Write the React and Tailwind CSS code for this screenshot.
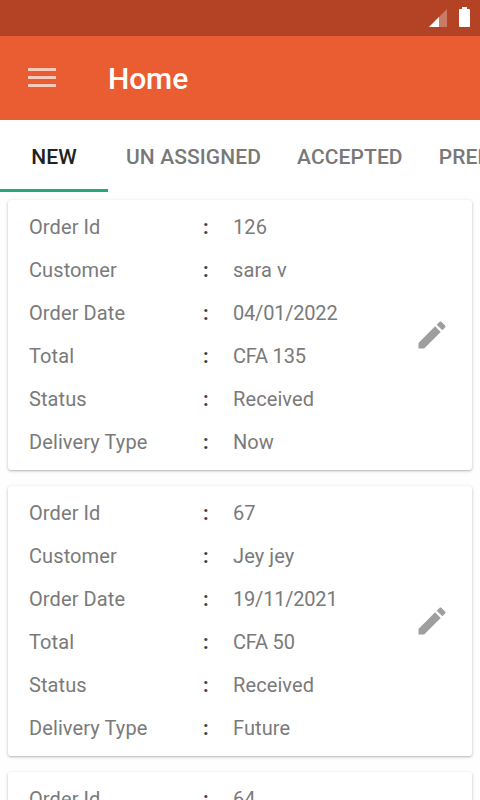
const orders = [
  { id: '126', customer: 'sara v', date: '04/01/2022', total: 'CFA 135', status: 'Received', delivery: 'Now' },
  { id: '67', customer: 'Jey jey', date: '19/11/2021', total: 'CFA 50', status: 'Received', delivery: 'Future' },
  { id: '64', customer: 'Jey jey', date: '19/11/2021', total: 'CFA 50', status: 'Received', delivery: 'Now' },
];

function Row({ label, value, numeric }) {
  return (
    <div className="flex h-[43px] items-center">
      <span className="w-[174px] text-[#7a7a7a]">{label}</span>
      <span className="w-[30px] font-bold text-[#424242]">:</span>
      <span className={numeric ? 'tracking-[-0.2px] text-[#7a7a7a]' : 'text-[#7a7a7a]'}>{value}</span>
    </div>
  );
}

function OrderCard({ order }) {
  return (
    <article className="flex h-[270px] shrink-0 items-center justify-between rounded-[3px] bg-white pl-[21px] pr-[22px] shadow-[0_1px_2px_rgba(0,0,0,0.2),0_1px_4px_rgba(0,0,0,0.12)]">
      <div className="pb-[2px] text-[20px] leading-[24px] tracking-[0.1px]">
        <Row label="Order Id" value={order.id} />
        <Row label="Customer" value={order.customer} />
        <Row label="Order Date" value={order.date} numeric />
        <Row label="Total" value={order.total} numeric />
        <Row label="Status" value={order.status} />
        <Row label="Delivery Type" value={order.delivery} />
      </div>
      <svg viewBox="0 0 24 24" className="size-9 fill-[#9e9e9e]">
        <path d="M3 17.25V21h3.75L17.81 9.94l-3.75-3.75L3 17.25zM20.71 7.04c.39-.39.39-1.02 0-1.41l-2.34-2.34c-.39-.39-1.02-.39-1.41 0l-1.83 1.83 3.75 3.75 1.83-1.83z" />
      </svg>
    </article>
  );
}

export default function App() {
  return (
    <div className="flex h-[800px] w-[480px] flex-col overflow-hidden bg-white font-['Roboto',sans-serif]">
      <div className="flex h-9 shrink-0 items-start justify-end bg-[#b34324] pr-[10px] pt-[7px]">
        <svg width="18" height="18" viewBox="0 0 18 18" className="mr-3 mt-[2px]">
          <path d="M0 18L18 0V18Z" fill="#fff" fillOpacity="0.3" />
          <path d="M0 18L10 8V18Z" fill="#fff" />
        </svg>
        <svg width="11" height="20" viewBox="0 0 11 20" fill="#fff">
          <path d="M3 0h5v2h2q1 0 1 1v16q0 1-1 1H1q-1 0-1-1V3q0-1 1-1h2z" />
        </svg>
      </div>
      <header className="flex h-[84px] shrink-0 items-center bg-[#ea5c32] pl-7">
        <div className="mb-[2px] flex w-7 flex-col gap-[5px]">
          <span className="h-[3px] bg-[#f7cabc]" />
          <span className="h-[3px] bg-[#f7cabc]" />
          <span className="h-[3px] bg-[#f7cabc]" />
        </div>
        <h1 className="ml-[52px] mt-px text-[30px] font-medium tracking-[-0.1px] text-white">Home</h1>
      </header>
      <nav className="flex h-[72px] shrink-0 whitespace-nowrap text-[21px] font-medium leading-[69px] tracking-[0.1px] text-[#787878]">
        <div className="w-[108px] shrink-0 border-b-[3px] border-[#26a97a] pt-[3px] text-center text-[#212121]">NEW</div>
        <div className="shrink-0 px-[18px] pt-[3px]">UN ASSIGNED</div>
        <div className="shrink-0 px-[18px] pt-[3px]">ACCEPTED</div>
        <div className="shrink-0 px-[18px] pt-[3px]">PREPARING</div>
      </nav>
      <main className="flex min-h-0 flex-1 flex-col gap-4 overflow-hidden bg-[#fefefe] px-2 pt-2">
        {orders.map((order) => (
          <OrderCard key={order.id} order={order} />
        ))}
      </main>
    </div>
  );
}
